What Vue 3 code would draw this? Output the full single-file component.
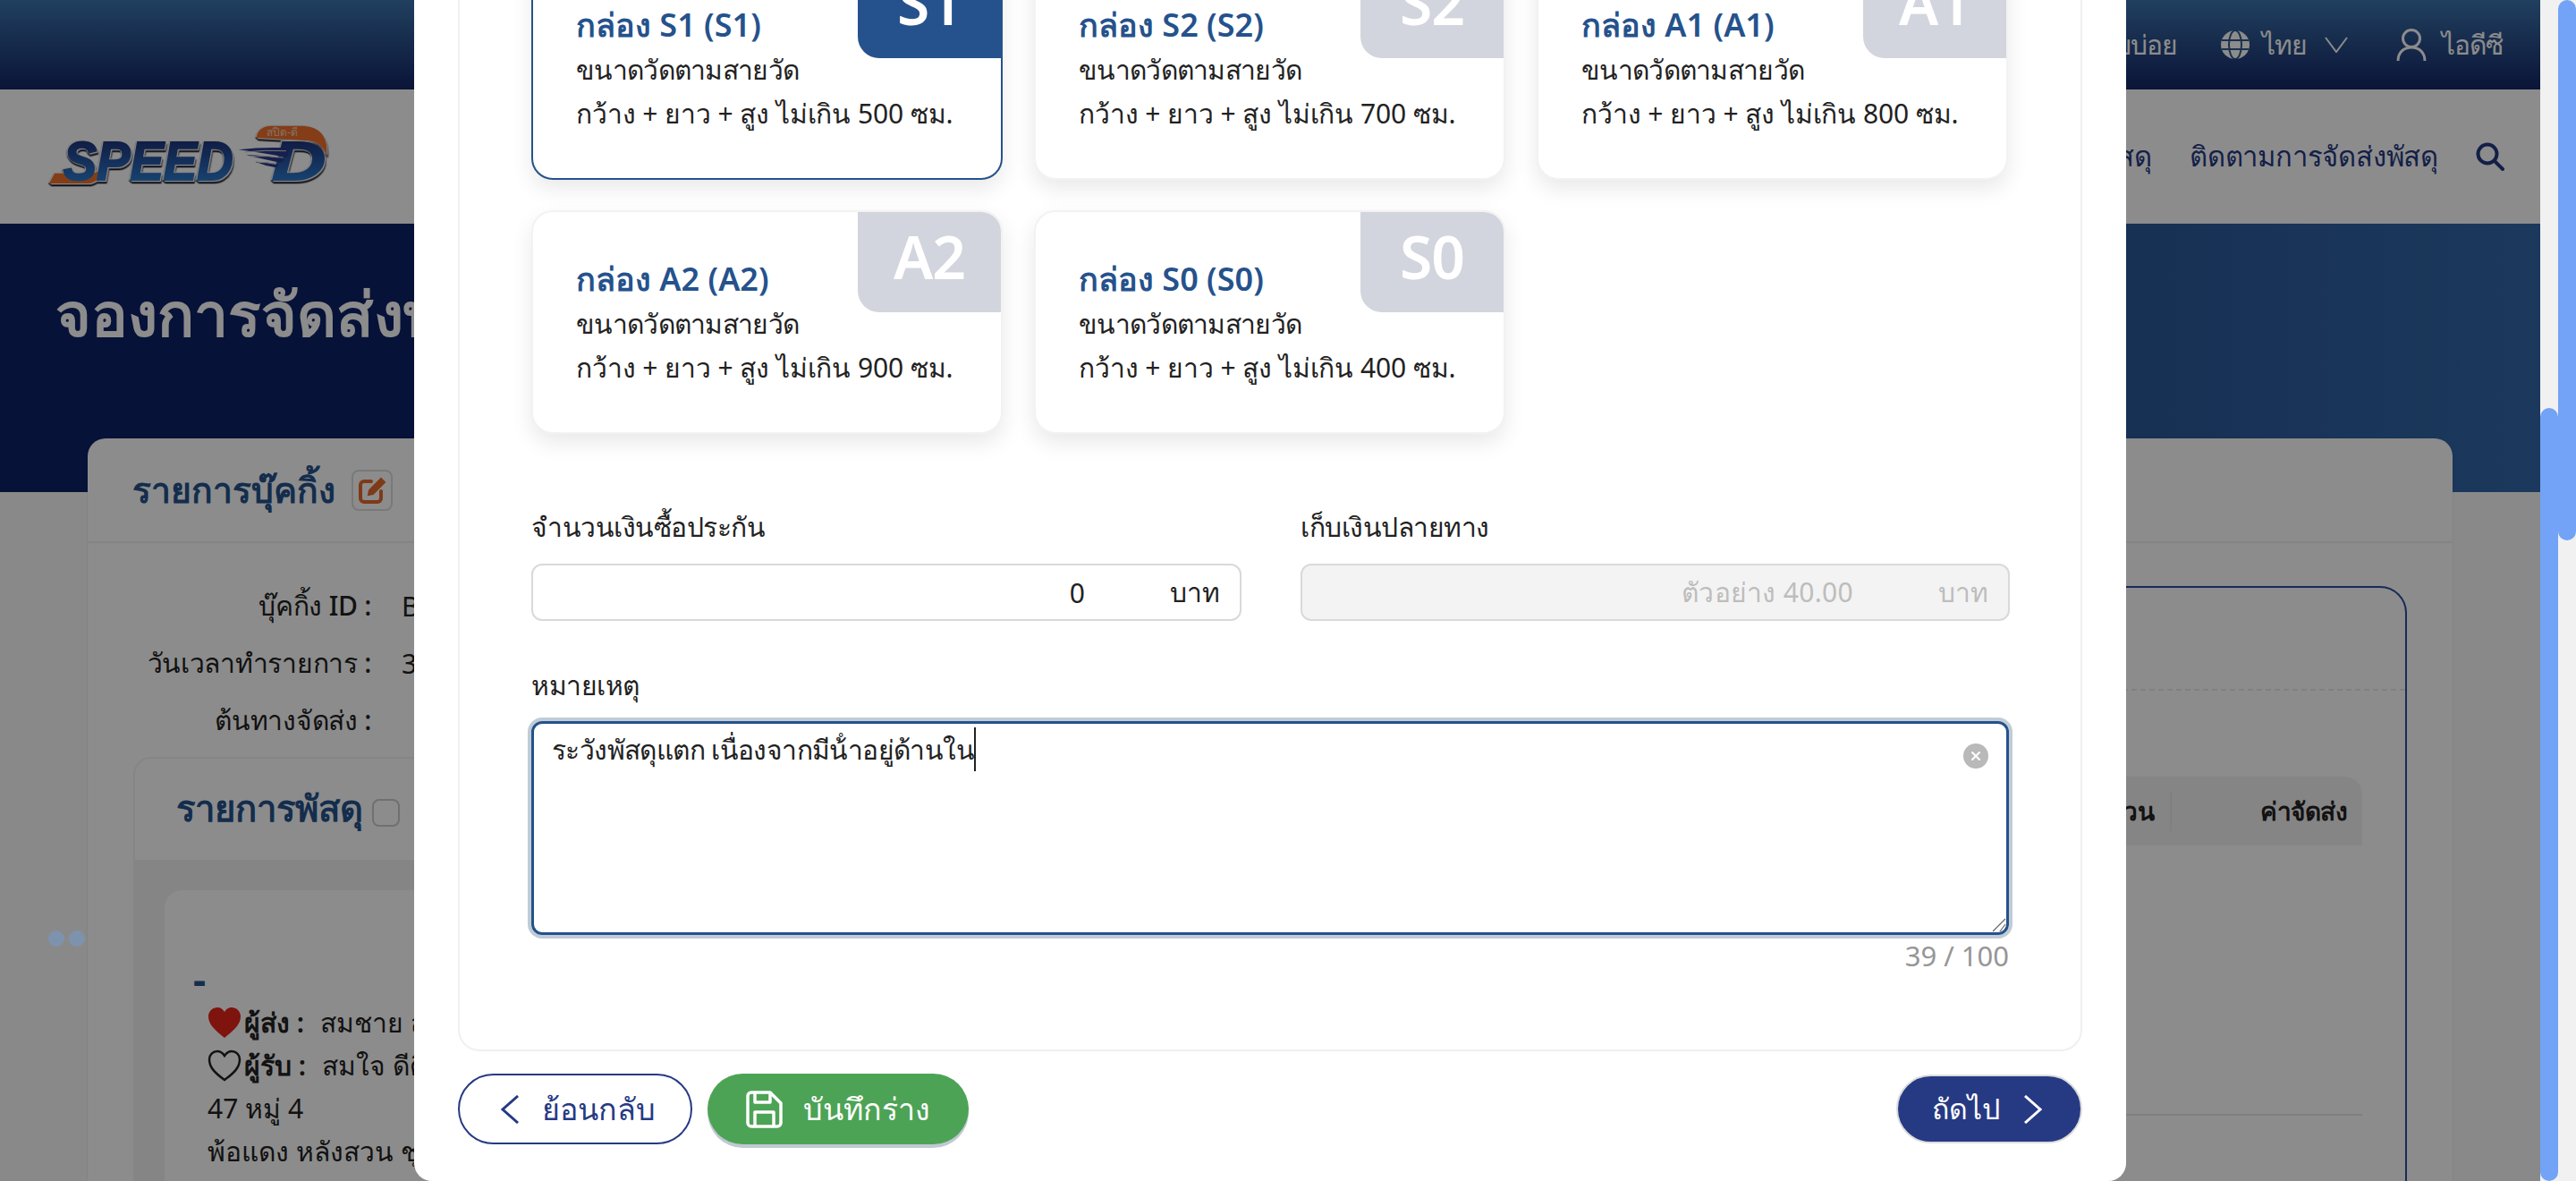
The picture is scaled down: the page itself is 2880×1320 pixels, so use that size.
<script setup>
const boxes = [
  { code: 'S1', limit: 500, active: true },
  { code: 'S2', limit: 700 },
  { code: 'A1', limit: 800 },
  { code: 'A2', limit: 900 },
  { code: 'S0', limit: 400 },
]
const note = 'ระวังพัสดุแตก เนื่องจากมีน้ําอยู่ด้านใน'
</script>

<template>
  <div class="app">
    <div class="page">
      <!-- หน้าหลัก (อยู่หลัง modal) -->
      <header class="topbar">
        <span>คำถามที่พบบ่อย</span>
        <span class="lang">
          <svg class="globe" viewBox="0 0 32 32">
            <circle cx="16" cy="16" r="16" fill="#fff" />
            <g fill="none" stroke="#2f5a8c" stroke-width="2">
              <ellipse cx="16" cy="16" rx="7" ry="16" />
              <path d="M1 11h30M1 21h30" />
            </g>
          </svg>
          <span>ไทย</span>
          <svg class="caret-down" viewBox="0 0 26 18"><path d="M1 1l12 16L25 1" fill="none" stroke="#fff" stroke-width="2" /></svg>
        </span>
        <span class="user">
          <svg class="user-icon" viewBox="0 0 34 36" fill="none" stroke="#fff" stroke-width="3">
            <circle cx="17" cy="11" r="9.5" />
            <path d="M2 36c0-9 6-15 15-15s15 6 15 15" />
          </svg>
          <span>ไอดีซี</span>
        </span>
      </header>

      <nav class="navbar">
        <svg class="logo" viewBox="0 0 1020 270">
          <defs>
            <linearGradient id="logoBlue" x1="0" y1="0" x2="0" y2="1">
              <stop offset="0" stop-color="#1b2468" />
              <stop offset="1" stop-color="#2f8ae0" />
            </linearGradient>
          </defs>
          <g class="logo-word">
            <path d="M45 225l18-34h130q22-4 32-26q-2 50-45 60z" fill="#f0702a" />
            <text class="logo-text" x="92" y="213" textLength="570" lengthAdjust="spacingAndGlyphs">SPEED</text>
            <text class="logo-text" x="792" y="213" textLength="180" lengthAdjust="spacingAndGlyphs">D</text>
            <path d="M740 72q4-38 50-40h110q85 8 75 100q-14-45-60-50z" fill="#f0702a" />
          </g>
          <text class="logo-th" x="775" y="66">สปีด-ดี</text>
          <g fill="#2a3a8a">
            <path d="M680 112q80-10 165-6q6 20-4 32q-70-14-161-26z" />
            <path d="M705 130q70 0 130 14l-12 12q-60-12-118-26z" />
            <path d="M735 152q40 0 80 10l-10 10q-35-6-70-20z" />
          </g>
          <g fill="none" stroke="#d8d8d8" stroke-width="3">
            <path d="M700 120q70-8 140-4M720 134q60-2 110 4M745 154q30 0 60 6" />
          </g>
        </svg>
        <div class="nav-links">
          <span>จองการจัดส่งพัสดุ</span>
          <span>ติดตามการจัดส่งพัสดุ</span>
          <svg class="search" viewBox="0 0 32 32" fill="none" stroke="#263a84" stroke-width="4">
            <circle cx="13" cy="13" r="10.5" />
            <path d="M21 21l9 9" stroke-linecap="round" />
          </svg>
        </div>
      </nav>

      <section class="hero">
        <h1>จองการจัดส่งพัสดุ</h1>
      </section>

      <main class="booking">
        <div class="booking-head">
          <h2>รายการบุ๊คกิ้ง</h2>
          <span class="edit-box">
            <svg viewBox="0 0 32 32" fill="none" stroke="#e56a2a" stroke-width="4">
              <path d="M15 6H7a4 4 0 0 0-4 4v15a4 4 0 0 0 4 4h15a4 4 0 0 0 4-4v-8" stroke-linecap="round" />
              <path d="M12 21l1-5L26 3l4 4L17 20z" fill="#e56a2a" stroke-width="2" />
            </svg>
          </span>
        </div>
        <div class="booking-body">
          <div class="left-col">
            <div class="info"><span class="info-label">บุ๊คกิ้ง ID :</span><span>B2024</span></div>
            <div class="info"><span class="info-label">วันเวลาทำรายการ :</span><span>30/01/2567</span></div>
            <div class="info"><span class="info-label">ต้นทางจัดส่ง :</span><span></span></div>

            <div class="parcels">
              <div class="parcels-head">
                <h3>รายการพัสดุ</h3>
                <span class="check"></span>
              </div>
              <div class="parcels-body">
                <div class="parcel">
                  <div class="dash">-</div>
                  <div class="person">
                    <svg class="heart" viewBox="0 0 38 36"><path d="M19 35C8 26 1 20 1 11 1 5 6 1 11 1c4 0 6 2 8 5 2-3 4-5 8-5 5 0 10 4 10 10 0 9-7 15-18 24z" fill="#e8241a" /></svg>
                    <b>ผู้ส่ง :</b><span class="person-name">สมชาย สมใจ</span>
                  </div>
                  <div class="person">
                    <svg class="heart" viewBox="0 0 38 36"><path d="M19 34C8 26 2 20 2 11 2 6 6 2 11 2c4 0 6 2 8 5 2-3 4-5 8-5 5 0 9 4 9 9 0 9-6 15-17 23z" fill="none" stroke="#222" stroke-width="2.5" /></svg>
                    <b>ผู้รับ :</b><span class="person-name">สมใจ ดีดี</span>
                  </div>
                  <div class="addr">47 หมู่ 4</div>
                  <div class="addr">พ้อแดง หลังสวน ชุมพร</div>
                </div>
              </div>
            </div>
          </div>

          <div class="summary">
            <div class="summary-head"></div>
            <div class="table-head">
              <span class="th-qty">จำนวน</span>
              <span class="th-sep"></span>
              <span class="th-fee">ค่าจัดส่ง</span>
            </div>
            <div class="table-line"></div>
          </div>
        </div>
      </main>

      <!-- modal เลือกขนาดกล่อง -->
      <div class="overlay">
        <div class="modal">
          <div class="panel">
            <div class="box-grid">
              <div v-for="b in boxes" :key="b.code" class="box-card" :class="{ active: b.active }">
                <div class="box-badge">{{ b.code }}</div>
                <div class="box-title">กล่อง {{ b.code }} ({{ b.code }})</div>
                <div class="box-desc thai">ขนาดวัดตามสายวัด</div>
                <div class="box-desc">กว้าง + ยาว + สูง ไม่เกิน {{ b.limit }} ซม.</div>
              </div>
            </div>

            <div class="form-row">
              <div class="field">
                <label>จำนวนเงินซื้อประกัน</label>
                <div class="input">
                  <span class="input-value">0</span>
                  <span class="input-unit">บาท</span>
                </div>
              </div>
              <div class="field">
                <label>เก็บเงินปลายทาง</label>
                <div class="input disabled">
                  <span class="input-value">ตัวอย่าง 40.00</span>
                  <span class="input-unit">บาท</span>
                </div>
              </div>
            </div>

            <div class="field note-field">
              <label>หมายเหตุ</label>
              <div class="note">
                {{ note }}<span class="text-caret"></span>
                <span class="clear">
                  <svg viewBox="0 0 28 28">
                    <circle cx="14" cy="14" r="14" fill="#b9b9b9" />
                    <path d="M10 10l8 8M18 10l-8 8" stroke="#fff" stroke-width="2" stroke-linecap="round" />
                  </svg>
                </span>
                <svg class="grip" viewBox="0 0 16 16"><path d="M1 15L15 1M9 15l6-8" fill="none" stroke="#666" stroke-width="1.2" /></svg>
              </div>
              <div class="count">{{ note.length }} / 100</div>
            </div>
          </div>

          <div class="footer">
            <button class="btn btn-back">
              <svg class="chev" viewBox="0 0 20 32"><path d="M19 1L2 16l17 15" fill="none" stroke="currentColor" stroke-width="3" /></svg>
              ย้อนกลับ
            </button>
            <button class="btn btn-save">
              <svg class="floppy" viewBox="0 0 41 42" fill="none" stroke="#fff" stroke-width="3.5" stroke-linejoin="round">
                <path d="M2 6a4 4 0 0 1 4-4h21l12 12v22a4 4 0 0 1-4 4H6a4 4 0 0 1-4-4z" />
                <path d="M10 2v11h17V2M10 40V24h21v16" />
              </svg>
              บันทึกร่าง
            </button>
            <button class="btn btn-next">
              ถัดไป
              <svg class="chev" viewBox="0 0 20 32"><path d="M1 1l17 15L1 31" fill="none" stroke="currentColor" stroke-width="3" /></svg>
            </button>
          </div>
        </div>
      </div>

      <div class="dots"><i></i><i></i></div>
    </div>

    <div class="scrollbars">
      <div class="track"><div class="thumb inner"></div></div>
      <div class="track"><div class="thumb outer"></div></div>
    </div>
  </div>
</template>

<style>
html, body { margin: 0; padding: 0; overflow: hidden; }
</style>

<style scoped>
.app {
  display: flex;
  width: 2880px;
  height: 1320px;
  overflow: hidden;
  font-family: "Noto Sans", "Open Sans", sans-serif;
  color: #222;
}
.page {
  position: relative;
  width: 2840px;
  height: 1320px;
  overflow: hidden;
  background: #fafafa;
}

/* ---------- scrollbars ---------- */
.scrollbars { display: flex; width: 40px; background: #f1f1f1; }
.track { width: 20px; }
.thumb { background: #72a3f6; border-radius: 10px; }
.thumb.inner { margin-top: 456px; height: 864px; }
.thumb.outer { height: 604px; }

/* ---------- page behind ---------- */
.topbar {
  height: 100px;
  display: flex;
  justify-content: flex-end;
  align-items: center;
  gap: 49px;
  padding-right: 42px;
  box-sizing: border-box;
  background: linear-gradient(#3c74ad, #142666);
  color: #fff;
  font-size: 30px;
  letter-spacing: -1px;
}
.lang, .user { display: flex; align-items: center; }
.globe { width: 32px; height: 32px; margin-right: 14px; }
.caret-down { width: 26px; height: 18px; margin-left: 20px; }
.user-icon { width: 34px; height: 36px; margin-right: 17px; }
.user { margin-left: 5px; }

.navbar {
  height: 150px;
  display: flex;
  align-items: center;
  justify-content: space-between;
  background: #fff;
  padding: 0 40px;
  box-sizing: border-box;
}
.logo { width: 340px; height: 90px; }
.logo-word { filter: drop-shadow(4px 4px 0 #eee) drop-shadow(-4px -3px 0 #eee) drop-shadow(1px 6px 0 #1a1a2a); }
.logo-text {
  font-family: "Liberation Sans", sans-serif;
  font-weight: 700;
  font-style: italic;
  font-size: 182px;
  fill: url(#logoBlue);
  stroke: url(#logoBlue);
  stroke-width: 6px;
}
.logo-th { font-size: 36px; fill: #f0d2bc; }
.nav-links {
  display: flex;
  align-items: center;
  gap: 42px;
  color: #263a84;
  font-size: 31px;
  letter-spacing: -.2px;
}
.search { width: 32px; height: 32px; }

.hero {
  height: 300px;
  background: linear-gradient(90deg, #0d2169 30%, #3369a9);
  color: #fff;
  box-sizing: border-box;
  padding: 57px 0 0 62px;
}
.hero h1 { margin: 0; font-size: 68px; font-weight: 600; line-height: 86px; }

.booking {
  margin: -60px 98px 0;
  height: 900px;
  background: #fff;
  border-radius: 20px 20px 0 0;
  box-shadow: 0 0 2px rgba(0, 0, 0, .15);
}
.booking-head {
  height: 117px;
  display: flex;
  align-items: center;
  padding-left: 50px;
  gap: 18px;
  box-sizing: border-box;
  border-bottom: 2px solid #f0f0f0;
}
.booking-head h2 { margin: 0; font-size: 39px; font-weight: 600; color: #25528c; }
.edit-box {
  width: 46px;
  height: 46px;
  box-sizing: border-box;
  border: 2px solid #ddd;
  border-radius: 8px;
  padding: 5px;
  display: flex;
}
.edit-box svg { width: 100%; height: 100%; }
.booking-body { display: flex; justify-content: space-between; padding: 0 51px; }
.left-col { width: 1300px; padding-top: 38px; }
.info { display: flex; height: 64px; align-items: center; font-size: 30px; gap: 34px; }
.info-label { width: 266px; text-align: right; white-space: nowrap; font-weight: 500; letter-spacing: -.3px; }

.parcels {
  margin-top: 9px;
  border: 2px solid #f2f2f2;
  border-radius: 20px 0 0 0;
  height: 600px;
}
.parcels-head { height: 113px; display: flex; align-items: center; padding-left: 46px; gap: 10px; }
.parcels-head h3 { margin: 0; font-size: 40px; font-weight: 600; color: #25528c; margin-top: -2px; }
.check {
  width: 31px;
  height: 31px;
  margin-top: 8px;
  box-sizing: border-box;
  border: 2px solid #ccc;
  border-radius: 8px;
}
.parcels-body { background: #f3f3f3; height: 480px; padding: 34px 0 0 33px; }
.parcel { background: #fff; height: 480px; border-radius: 20px 0 0 0; padding: 74px 0 0 32px; box-sizing: border-box; }
.dash { color: #25528c; font-size: 44px; font-weight: 700; line-height: 50px; }
.person { display: flex; align-items: center; height: 48px; margin-left: 16px; font-size: 30px; }
.person b { font-weight: 600; margin-left: 3px; }
.person-name { margin-left: 18px; }
.heart { width: 38px; height: 36px; }
.addr { height: 48px; line-height: 48px; margin-left: 16px; font-size: 30px; }

.summary {
  width: 1200px;
  margin-top: 48px;
  height: 800px;
  box-sizing: border-box;
  border: 2px solid #2c4f9e;
  border-radius: 30px;
  padding: 0 48px;
}
.summary-head { height: 113px; margin: 0 -48px; border-bottom: 2px dashed #e9e9e9; }
.table-head {
  margin-top: 96px;
  height: 77px;
  display: flex;
  align-items: center;
  justify-content: flex-end;
  background: #f3f3f3;
  border-radius: 0 20px 0 0;
  font-size: 28px;
  font-weight: 700;
  letter-spacing: -.5px;
  padding-right: 17px;
}
.th-sep { width: 2px; height: 44px; background: #eaeaea; margin: 0 99px 0 18px; }
.table-line { margin-top: 300px; height: 2px; background: #eaeaea; }

.dots { position: absolute; left: 54px; top: 1040px; display: flex; gap: 5px; }
.dots i { width: 18px; height: 18px; border-radius: 50%; background: #7d93ad; }

/* ---------- overlay / modal ---------- */
.overlay {
  position: absolute;
  inset: 0;
  background: rgba(0, 0, 0, .45);
  display: flex;
  justify-content: center;
}
.modal {
  width: 1914px;
  height: 1320px;
  box-sizing: border-box;
  background: #fff;
  border-radius: 0 0 20px 20px;
  padding: 0 49px;
}
.panel {
  height: 1175px;
  box-sizing: border-box;
  border: 2px solid #f0f0f0;
  border-top: 0;
  border-radius: 0 0 24px 24px;
  padding: 0 80px;
  overflow: hidden;
}
.box-grid {
  display: grid;
  grid-template-columns: repeat(3, 527px);
  grid-auto-rows: 250px;
  gap: 34px 35px;
  margin-top: -49px;
}
.box-card {
  position: relative;
  box-sizing: border-box;
  padding: 49px 0 0 48px;
  background: #fff;
  border: 2px solid #f2f2f2;
  border-radius: 24px;
  box-shadow: 0 10px 24px rgba(0, 0, 0, .09);
  overflow: hidden;
}
.box-card.active { border-color: #25528c; }
.box-badge {
  position: absolute;
  top: 0;
  right: 0;
  width: 160px;
  height: 112px;
  background: #d2d5dd;
  border-radius: 0 0 0 24px;
  color: #fff;
  font-size: 66px;
  font-weight: 600;
  letter-spacing: -1px;
  line-height: 98px;
  text-align: center;
}
.box-card.active .box-badge { background: #25528c; }
.box-title { font-size: 36px; font-weight: 600; color: #25528c; line-height: 51px; }
.box-desc { font-size: 30px; line-height: 49px; color: #222; white-space: nowrap; letter-spacing: -.1px; }
.box-desc.thai { letter-spacing: -.7px; }

.form-row { display: grid; grid-template-columns: 794px 793px; gap: 66px; margin-top: 82px; }
.field label { display: block; font-size: 30px; line-height: 44px; margin-bottom: 19px; color: #222; letter-spacing: -.5px; }
.input {
  height: 64px;
  box-sizing: border-box;
  border: 2px solid #d9d9d9;
  border-radius: 12px;
  display: flex;
  justify-content: flex-end;
  align-items: center;
  font-size: 30px;
  padding-right: 22px;
}
.input-unit { margin-left: 95px; }
.input.disabled { background: #f3f3f3; color: #bdbdbd; }
.input.disabled .input-value { letter-spacing: .3px; }

.note-field { margin-top: 50px; }
.note-field label { margin-bottom: 18px; }
.note {
  position: relative;
  height: 239px;
  box-sizing: border-box;
  border: 3px solid #25528c;
  border-radius: 12px;
  box-shadow: 0 0 0 4px #c0ccd6;
  padding: 4px 20px;
  font-size: 30px;
  line-height: 49px;
  letter-spacing: -.6px;
}
.text-caret {
  display: inline-block;
  width: 2px;
  height: 49px;
  background: #222;
  vertical-align: top;
}
.clear { position: absolute; right: 20px; top: 22px; width: 28px; height: 28px; }
.clear svg { display: block; }
.grip { position: absolute; right: 0; bottom: 0; width: 16px; height: 16px; }
.count { text-align: right; color: #969696; font-size: 31px; line-height: 36px; margin-top: 5px; }

.footer { display: flex; align-items: center; gap: 17px; margin-top: 25px; }
.btn {
  height: 79px;
  box-sizing: border-box;
  border-radius: 40px;
  display: flex;
  align-items: center;
  justify-content: center;
  font-family: inherit;
  font-size: 34px;
  padding: 0;
}
.chev { width: 20px; height: 32px; }
.btn-back { width: 262px; background: #fff; border: 2px solid #263a84; color: #263a84; gap: 26px; padding-left: 7px; }
.btn-save { width: 292px; background: #4da355; border: 0; color: #fff; gap: 23px; box-shadow: 0 4px 0 #c0c9d2; }
.floppy { width: 41px; height: 42px; }
.btn-next {
  width: 208px;
  margin-left: auto;
  height: 77px;
  background: #263a84;
  border: 2px solid #dcdcdc;
  color: #fff;
  gap: 27px;
  font-size: 32px;
  padding-right: 6px;
}
</style>
